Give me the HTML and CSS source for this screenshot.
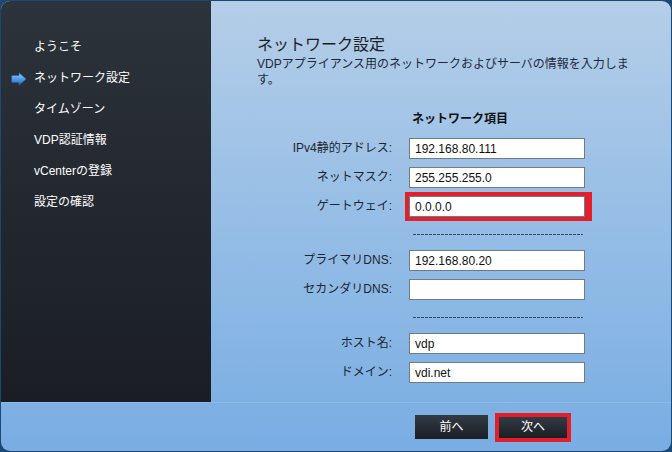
FILE: index.html
```html
<!DOCTYPE html>
<html lang="ja">
<head>
<meta charset="utf-8">
<title>ネットワーク設定</title>
<link rel="stylesheet" href="styles.css">
</head>
<body>
<div class="window">
  <nav class="sidebar">
    <ul class="steps">
      <li class="step"><span class="marker"></span>ようこそ</li>
      <li class="step active"><span class="marker"><svg width="16" height="14" viewBox="0 0 16 14"><defs><linearGradient id="ag" x1="0" y1="0" x2="0" y2="1"><stop offset="0" stop-color="#9fd0fa"/><stop offset="0.5" stop-color="#4f9be6"/><stop offset="1" stop-color="#2a6fc2"/></linearGradient></defs><path d="M1.5 3.5 H8 V0.8 L15.2 7 L8 13.2 V10.5 H1.5 Q0.6 10.5 0.6 9.6 V4.4 Q0.6 3.5 1.5 3.5 Z" fill="url(#ag)" stroke="#2160a8" stroke-width="0.7"/></svg></span>ネットワーク設定</li>
      <li class="step"><span class="marker"></span>タイムゾーン</li>
      <li class="step"><span class="marker"></span>VDP認証情報</li>
      <li class="step"><span class="marker"></span>vCenterの登録</li>
      <li class="step"><span class="marker"></span>設定の確認</li>
    </ul>
  </nav>
  <main class="content">
    <h1 class="title">ネットワーク設定</h1>
    <p class="desc">VDPアプライアンス用のネットワークおよびサーバの情報を入力しま<br>す。</p>
    <div class="form">
      <div class="form-head">ネットワーク項目</div>
      <label class="label">IPv4静的アドレス:</label><input class="field" type="text" value="192.168.80.111">
      <label class="label">ネットマスク:</label><input class="field" type="text" value="255.255.255.0">
      <label class="label">ゲートウェイ:</label><input class="field highlight" type="text" value="0.0.0.0">
      <div class="sep"></div>
      <label class="label">プライマリDNS:</label><input class="field" type="text" value="192.168.80.20">
      <label class="label">セカンダリDNS:</label><input class="field" type="text" value="">
      <div class="sep"></div>
      <label class="label">ホスト名:</label><input class="field" type="text" value="vdp">
      <label class="label">ドメイン:</label><input class="field" type="text" value="vdi.net">
    </div>
  </main>
  <footer class="footer">
    <button class="btn">前へ</button>
    <button class="btn btn-next">次へ</button>
  </footer>
</div>
</body>
</html>
```
FILE: styles.css
```css
* { box-sizing: border-box; }
html, body { margin: 0; padding: 0; }
body {
  width: 672px;
  height: 452px;
  background: #1b4874;
  font-family: "Liberation Sans", "Noto Sans CJK JP", sans-serif;
  font-size: 12px;
  overflow: hidden;
}
.window {
  margin: 1px;
  width: 670px;
  height: 450px;
  border-radius: 9px;
  overflow: hidden;
  background: linear-gradient(to bottom, #b5cee8 0%, #98bfe6 45%, #79ade3 100%);
  display: grid;
  grid-template-columns: 210px 1fr;
  grid-template-rows: 401px 1fr;
}
.sidebar {
  background: linear-gradient(to bottom, #2d333b 0%, #23282f 50%, #1a1e24 100%);
  padding-top: 31px;
}
.steps { list-style: none; margin: 0; padding: 0; }
.step {
  display: flex;
  align-items: center;
  height: 31px;
  padding-left: 10px;
  color: #ffffff;
  font-size: 12px;
  line-height: 31px;
}
.marker {
  width: 23px;
  height: 14px;
  display: flex;
  align-items: center;
}
.content {
  padding-left: 46px;
  padding-top: 34px;
  color: #1a1a1a;
}
.title {
  margin: 0;
  font-size: 16px;
  line-height: 20px;
  font-weight: normal;
  color: #1b1f26;
}
.desc {
  margin: 1px 0 0;
  font-size: 12px;
  line-height: 16px;
  color: #1d2a3c;
}
.form {
  margin-top: 21px;
  display: grid;
  grid-template-columns: 135px 176px;
  column-gap: 17px;
  row-gap: 8px;
}
.form-head {
  grid-column: 2;
  height: 21px;
  line-height: 21px;
  padding-left: 3px;
  font-weight: bold;
  color: #111;
}
.label {
  grid-column: 1;
  text-align: right;
  height: 21px;
  line-height: 21px;
  color: #1e2530;
}
.field {
  grid-column: 2;
  width: 176px;
  height: 21px;
  margin: 0;
  padding: 0 5px;
  border: 1px solid #6f7b88;
  background: #ffffff;
  font-family: "Liberation Sans", "Noto Sans CJK JP", sans-serif;
  font-size: 12px;
  color: #111;
  outline: none;
}
.highlight {
  box-shadow: 0 0 0 4px #e21f2b, 3px 0 0 4px #e21f2b;
}
.sep {
  grid-column: 2;
  height: 17px;
  margin: 0 2px 0 4px;
  background: repeating-linear-gradient(to right, #3c4652 0 3px, transparent 3px 4px);
  background-size: 100% 1px;
  background-repeat: no-repeat;
  background-position: 0 9px;
}
.footer {
  grid-column: 1 / -1;
  border-top: 1px solid rgba(150, 190, 230, 0.7);
  display: flex;
  align-items: center;
  padding-left: 414px;
  gap: 7px;
}
.btn {
  width: 73px;
  height: 24px;
  border: 0;
  padding: 0;
  background: linear-gradient(to bottom, #333a44 0%, #1b1f26 100%);
  color: #ffffff;
  font-family: "Liberation Sans", "Noto Sans CJK JP", sans-serif;
  font-size: 12px;
  line-height: 1;
}
.btn-next {
  width: 76px;
  height: 29px;
  border: 4px solid #e21f2b;
}
```
